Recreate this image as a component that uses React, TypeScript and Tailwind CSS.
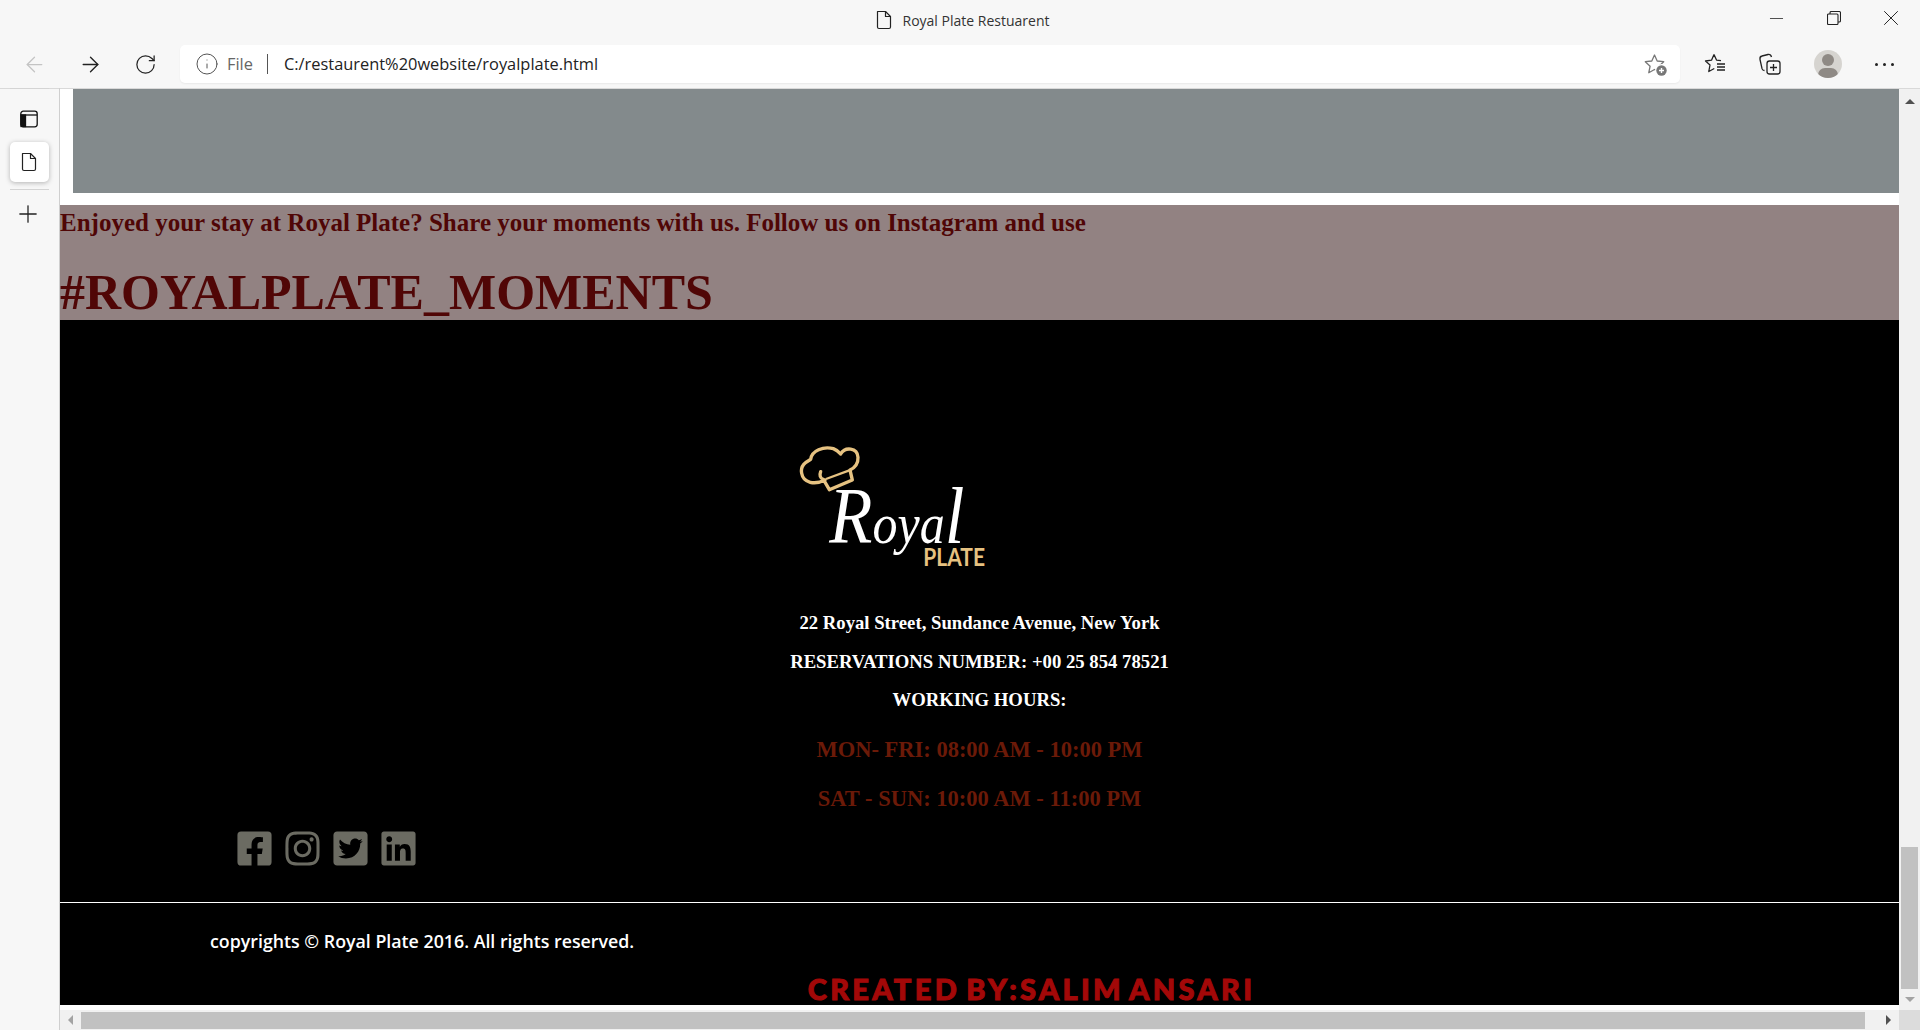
import { ArrowLeft, ArrowRight, RotateCw, Info, Plus, X, Minus } from "lucide-react";
import { FaFacebookSquare, FaInstagram, FaTwitterSquare, FaLinkedin } from "react-icons/fa";

function FileIcon({ className }: { className?: string }) {
  return (
    <svg viewBox="0 0 16 20" className={className} fill="none" stroke="currentColor" strokeWidth="1.2" strokeLinejoin="round">
      <path d="M1.5 1.5h8l5 5v10.5a1.500 1.500 0 0 1-1.500 1.500h-10a1.500 1.500 0 0 1-1.500-1.500z" />
      <path d="M9.5 1.5v5h5" />
    </svg>
  );
}

function Logo() {
  return (
    <svg viewBox="0 0 720 450" className="block w-[240px] h-[150px] ml-[710px]">
      <path
        d="M165 150 C135 165 100 160 95 130 C90 105 110 95 122 88 C125 62 160 48 190 56 C205 62 210 70 212 72 C225 50 262 52 264 82 C265 105 250 115 240 120 L247 150 L178 179 L160 148 C150 145 148 135 152 125"
        fill="none"
        stroke="#e6c281"
        strokeWidth="10"
        strokeLinejoin="round"
        strokeLinecap="round"
      />
      <path d="M168 147 L238 121" fill="none" stroke="#e6c281" strokeWidth="7" />
      <text
        x="178"
        y="340"
        fontFamily="'Liberation Serif', serif"
        fontStyle="italic"
        fontSize="240"
        fill="#ffffff"
        textLength="405"
        lengthAdjust="spacingAndGlyphs"
      >
        R<tspan fontSize="170">oya</tspan>l
      </text>
      <text
        x="460"
        y="407"
        fontFamily="Lato, sans-serif"
        fontWeight="700"
        fontSize="76"
        fill="#e6c281"
        textLength="185"
        lengthAdjust="spacingAndGlyphs"
      >
        PLATE
      </text>
    </svg>
  );
}

export default function App() {
  return (
    <div className="w-[1920px] h-[1030px] overflow-hidden flex flex-col bg-[#f7f7f7] font-['Open_Sans',sans-serif]">
      {/* title bar */}
      <div className="h-[45px] shrink-0 relative flex items-center justify-center pb-[5px] pl-[5px] text-[14px] text-[#333]">
        <FileIcon className="w-[16px] h-[20px] mr-[11px] text-[#222]" />
        <span>Royal Plate Restuarent</span>
        <div className="absolute right-0 top-0 h-[36px] flex items-center text-[#222]">
          <div className="w-[57px] flex justify-center"><Minus size={21} strokeWidth={0.9} /></div>
          <div className="w-[57px] flex justify-center">
            <svg width="14" height="14" viewBox="0 0 14 14" fill="none" stroke="currentColor" strokeWidth="1.1">
              <rect x="0.5" y="3" width="10.5" height="10.5" rx="1" />
              <path d="M3 3V1.8A1.3 1.3 0 0 1 4.3.5h8a1.3 1.3 0 0 1 1.2 1.3v8A1.3 1.3 0 0 1 12.2 11H11" />
            </svg>
          </div>
          <div className="w-[58px] flex justify-center"><X size={26} strokeWidth={0.9} /></div>
        </div>
      </div>
      {/* toolbar */}
      <div className="h-[44px] shrink-0 flex items-start text-[#222] border-b border-[#d9d9d9]">
        <div className="w-[180px] h-[38px] flex items-center pl-[22px] gap-[31px]">
          <ArrowLeft size={25} strokeWidth={1.2} className="text-[#c4c4c4]" />
          <ArrowRight size={25} strokeWidth={1.3} />
          <RotateCw size={23} strokeWidth={1.3} />
        </div>
        <div className="w-[1500px] h-[38px] bg-white rounded-[5px] shadow-[0_1px_2px_rgba(0,0,0,0.06)] flex items-center pl-[15px] pr-[12px] text-[16.4px]">
          <Info size={24} strokeWidth={1} className="text-[#555]" />
          <span className="ml-[8px] text-[#666]">File</span>
          <span className="ml-[14px] w-px h-[20px] bg-[#555]" />
          <span className="ml-[16px] text-[#222]">C:/restaurent%20website/royalplate.html</span>
          <svg viewBox="0 0 24 24" className="ml-auto mt-[2px] w-[24px] h-[24px]" fill="none">
            <path d="M10.500 2l2.700 6 6.500.7-4.800 4.500 1.300 6.500-5.700-3.200-5.700 3.200 1.300-6.500-4.800-4.500 6.500-.7z" stroke="#777" strokeWidth="1.3" strokeLinejoin="round" />
            <circle cx="17.500" cy="17.500" r="6.500" fill="#fff" />
            <circle cx="17.500" cy="17.500" r="5.200" fill="#777" />
            <path d="M17.500 15v5M15 17.500h5" stroke="#fff" strokeWidth="1.400" />
          </svg>
        </div>
        <div className="flex-1 h-[38px] relative">
          <svg viewBox="0 0 24 24" className="absolute left-[23px] top-[7px] w-[24px] h-[24px]" fill="none" stroke="#222" strokeWidth="1.3" strokeLinejoin="round">
            <path d="M11 2.500l2.500 5.600 4.500.5M11 2.500L8.500 8.200 2.500 9l4.500 4-1.200 6.500 5.500-3" />
            <path d="M14 12h8M14 15h8M14 18h8" />
          </svg>
          <svg viewBox="0 0 24 24" className="absolute left-[78px] top-[7px] w-[24px] h-[24px]" fill="none" stroke="#222" strokeWidth="1.3" strokeLinejoin="round">
            <rect x="9" y="9" width="13" height="13" rx="2.500" />
            <path d="M15.500 12v7M12 15.500h7" />
            <path d="M6.500 18.500c-1.200 0-2-.5-2.400-1.600L2 7.500C1.700 5.500 2.500 4.300 4 4l6-1.500c2-.3 3 .5 3.500 2.500" />
          </svg>
          <div className="absolute left-[134px] top-[5px] w-[28px] h-[28px] rounded-full bg-[#d6d4d0] overflow-hidden">
            <div className="absolute left-[8px] top-[4px] w-[12px] h-[12px] rounded-full bg-[#8f8a85]" />
            <div className="absolute left-[4px] top-[18px] w-[20px] h-[14px] rounded-full bg-[#8f8a85]" />
          </div>
          <div className="absolute left-[195px] top-[18px] flex gap-[5px]">
            <span className="w-[3px] h-[3px] rounded-full bg-[#222]" />
            <span className="w-[3px] h-[3px] rounded-full bg-[#222]" />
            <span className="w-[3px] h-[3px] rounded-full bg-[#222]" />
          </div>
        </div>
      </div>
      {/* body */}
      <div className="flex-1 min-h-0 flex">
        <div className="w-[60px] shrink-0 border-r border-[#cfcfcf] flex flex-col items-center relative -mt-px text-[#222]">
          <div className="w-[39px] h-px bg-[#d4d4d4] mr-[1px]" />
          <svg viewBox="0 0 18 18" className="mt-[21px] mr-[2px] w-[18px] h-[18px]" fill="none" stroke="#111" strokeWidth="1.3">
            <rect x="0.8" y="1.2" width="16.4" height="15.6" rx="2.500" />
            <path d="M1 5h16" />
            <rect x="1" y="5" width="4.500" height="11.500" fill="#111" />
          </svg>
          <div className="mt-[14px] w-[39px] h-[40px] mr-[1px] bg-white rounded-[5px] shadow-[0_1px_5px_rgba(0,0,0,0.28)] flex items-center justify-center">
            <FileIcon className="w-[16px] h-[20px]" />
          </div>
          <div className="mt-[7px] w-[39px] h-px bg-[#d4d4d4] mr-[1px]" />
          <Plus size={28} strokeWidth={1.1} className="mt-[10px] mr-[3px]" />
        </div>
        <div className="flex-1 min-w-0 flex flex-col bg-white">
          <div className="flex-1 min-h-0 flex">
            <div className="flex-1 min-w-0 flex flex-col">
              <div className="h-[104px] ml-[13px] bg-[#838a8c] shrink-0" />
              <div className="h-[12px] shrink-0" />
              <div className="h-[115px] shrink-0 bg-[#928282] font-['Liberation_Serif',serif] font-bold text-[#500606] overflow-hidden">
                <p className="text-[25px] leading-[36px]">Enjoyed your stay at Royal Plate? Share your moments with us. Follow us on Instagram and use</p>
                <h1 className="text-[50px] leading-[56px] mt-[23px]">#ROYALPLATE_MOMENTS</h1>
              </div>
              <div className="h-[685px] shrink-0 bg-black overflow-hidden">
                <div className="pt-[110px]"><Logo /></div>
                <div className="font-['Liberation_Serif',serif] font-bold text-center text-white text-[18.72px] leading-[21px] mt-[32px]">
                  <p>22 Royal Street, Sundance Avenue, New York</p>
                  <p className="mt-[18px]">RESERVATIONS NUMBER: +00 25 854 78521</p>
                  <p className="mt-[17px]">WORKING HOURS:</p>
                </div>
                <div className="font-['Liberation_Serif',serif] font-bold text-center text-[#6b1a08] text-[22.5px] leading-[27px] mt-[26px]">
                  <p>MON- FRI: 08:00 AM - 10:00 PM</p>
                  <p className="mt-[22px]">SAT - SUN: 10:00 AM - 11:00 PM</p>
                </div>
                <div className="flex ml-[177px] gap-[14px] mt-[17px] text-[#6b6b62] text-[34px] leading-none">
                  <FaFacebookSquare size={39} className="-mx-[2.5px]" />
                  <FaInstagram size={39} className="-mx-[2.5px]" />
                  <FaTwitterSquare size={39} className="-mx-[2.5px]" />
                  <FaLinkedin size={39} className="-mx-[2.5px]" />
                </div>
                <div className="h-px bg-white mt-[34px]" />
                <p className="ml-[150px] mt-[26px] text-white text-[17.8px] leading-[25px] font-semibold">copyrights © Royal Plate 2016. All rights reserved.</p>
                <p className="mt-[21px] text-center ml-[104px] font-['Lato',sans-serif] font-black text-[#a30808] text-[29px] leading-[28px] tracking-[3.3px] [word-spacing:-4px] [-webkit-text-stroke:1px_#a30808]">CREATED BY:SALIM ANSARI</p>
              </div>
              <div className="h-[5px] shrink-0 bg-white" />
            </div>
            {/* vertical scrollbar */}
            <div className="w-[21px] shrink-0 bg-[#f1f1f1] flex flex-col items-center">
              <div className="h-[21px] flex items-center justify-center mt-[2px]">
                <div className="w-0 h-0 border-x-[5px] border-x-transparent border-b-[5px] border-b-[#505050]" />
              </div>
              <div className="w-[17px] h-[142px] bg-[#c1c1c1] mt-[735px]" />
              <div className="h-[21px] flex items-center justify-center">
                <div className="w-0 h-0 border-x-[5px] border-x-transparent border-t-[5px] border-t-[#a3a3a3]" />
              </div>
            </div>
          </div>
          {/* horizontal scrollbar */}
          <div className="h-[20px] shrink-0 flex bg-[#f1f1f1]">
            <div className="w-[21px] flex items-center justify-center">
              <div className="w-0 h-0 border-y-[5px] border-y-transparent border-r-[5px] border-r-[#a3a3a3]" />
            </div>
            <div className="w-[1784px] h-[17px] my-auto bg-[#c1c1c1]" />
            <div className="flex-1 flex items-center justify-center pl-[12px]">
              <div className="w-0 h-0 border-y-[5px] border-y-transparent border-l-[5px] border-l-[#505050]" />
            </div>
            <div className="w-[21px] bg-[#dcdcdc]" />
          </div>
        </div>
      </div>
    </div>
  );
}
